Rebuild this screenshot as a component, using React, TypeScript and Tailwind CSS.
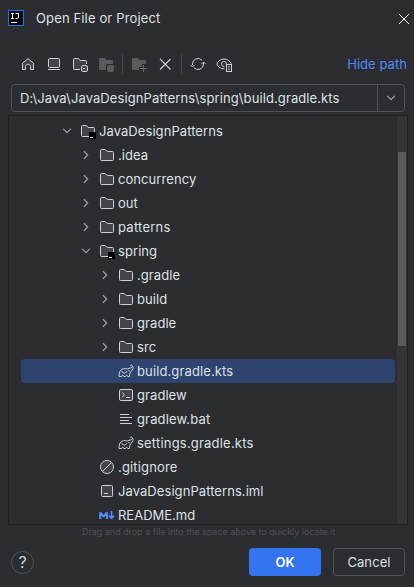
import React from "react";

type IconName = "folder" | "module" | "gradle" | "shell" | "text" | "ignored" | "iml" | "md";

interface Node {
  name: string;
  icon: IconName;
  arrow?: "open" | "closed";
  pad: string;
  tracking?: string;
  selected?: boolean;
}

const nodes: Node[] = [
  { name: "JavaDesignPatterns", icon: "module", arrow: "open", pad: "pl-[50px]" },
  { name: ".idea", icon: "folder", arrow: "closed", pad: "pl-[69px]" },
  { name: "concurrency", icon: "folder", arrow: "closed", pad: "pl-[69px]" },
  { name: "out", icon: "folder", arrow: "closed", pad: "pl-[69px]" },
  { name: "patterns", icon: "folder", arrow: "closed", pad: "pl-[69px]", tracking: "tracking-[0.25px]" },
  { name: "spring", icon: "module", arrow: "open", pad: "pl-[69px]" },
  { name: ".gradle", icon: "folder", arrow: "closed", pad: "pl-[88px]" },
  { name: "build", icon: "folder", arrow: "closed", pad: "pl-[88px]" },
  { name: "gradle", icon: "folder", arrow: "closed", pad: "pl-[88px]" },
  { name: "src", icon: "folder", arrow: "closed", pad: "pl-[88px]" },
  { name: "build.gradle.kts", icon: "gradle", pad: "pl-[88px]", tracking: "tracking-[0.12px]", selected: true },
  { name: "gradlew", icon: "shell", pad: "pl-[88px]" },
  { name: "gradlew.bat", icon: "text", pad: "pl-[88px]", tracking: "tracking-[0.15px]" },
  { name: "settings.gradle.kts", icon: "gradle", pad: "pl-[88px]", tracking: "tracking-[0.2px]" },
  { name: ".gitignore", icon: "ignored", pad: "pl-[69px]", tracking: "tracking-[0.15px]" },
  { name: "JavaDesignPatterns.iml", icon: "iml", pad: "pl-[69px]" },
  { name: "README.md", icon: "md", pad: "pl-[69px]", tracking: "tracking-normal" },
];

function Svg({ children }: { children: React.ReactNode }) {
  return (
    <svg width="16" height="16" viewBox="0 0 16 16" fill="none" stroke="#ced0d6" className="shrink-0">
      {children}
    </svg>
  );
}

const folderPath =
  "M1.5 3.5a1 1 0 0 1 1-1h3.7l2.1 2h5.2a1 1 0 0 1 1 1v7a1 1 0 0 1-1 1h-11a1 1 0 0 1-1-1z";

function FileIcon({ name }: { name: IconName }) {
  switch (name) {
    case "folder":
      return <Svg><path d={folderPath} fill="#43454a" /></Svg>;
    case "module":
      return (
        <Svg>
          <path d={folderPath} fill="#43454a" />
          <rect x="9" y="9" width="7" height="7" fill="#000" stroke="none" />
          <path d="M10 14.5h3" stroke="#fff" />
        </Svg>
      );
    case "gradle":
      return (
        <Svg>
          <path d="M1 13.5C.9 10 1.8 7.2 4.2 6.1c2-.9 3.7-.1 5.3-.2 1.2-.1 1.6-.9 2.6-.9 1.6 0 2.3-1 2.3-1.9 0-1.3-1.9-1.4-2.2-.4M14.4 3.1c1.3 1.4.5 3.5-1 4.9-.8.8-1.4 1.4-1.5 2.6-.1 1.3-.3 2-.6 2.9H9.7c-.1-1.6-2-1.6-2.2 0H5.8c-.1-1.6-2-1.6-2.2 0H1" strokeLinejoin="round" />
          <path d="M3.8 8.3c.5 1.7 2.1 2.2 3.5 1.4l1.6-1.1M10.6 7.5l.8.5" strokeLinecap="round" />
        </Svg>
      );
    case "shell":
      return (
        <Svg>
          <rect x="1.5" y="2.5" width="13" height="11" rx="1.5" fill="#43454a" />
          <path d="m4.2 5.7 2.3 2.1-2.3 2.1M8 10.5h4" />
        </Svg>
      );
    case "text":
      return <Svg><path d="M2 3.5h9M2 6.5h12M2 9.5h9M2 12.5h12" /></Svg>;
    case "ignored":
      return (
        <Svg>
          <circle cx="8" cy="8" r="6.5" fill="#43454a" />
          <path d="m3.5 12.5 9-9" />
        </Svg>
      );
    case "iml":
      return (
        <Svg>
          <rect x="2.5" y="2.5" width="11" height="11" rx="1" fill="#43454a" />
          <path d="M5 10.5h4" />
        </Svg>
      );
    case "md":
      return (
        <Svg>
          <path d="M1.2 12V5.4L4.6 9.6 8 5.4V12" stroke="#548af7" strokeWidth="2.2" strokeLinejoin="bevel" />
          <path d="M12.500 4v7.500M10 8.700l2.500 2.600L15 8.700" stroke="#548af7" strokeWidth="1.700" />
        </Svg>
      );
  }
}

function Chevron({ open }: { open: boolean }) {
  return (
    <Svg>
      <path d={open ? "M4.5 6.2 8 9.7l3.5-3.5" : "m6.2 4.5 3.5 3.5-3.5 3.5"} stroke="#9da0a8" strokeWidth="1.2" strokeLinecap="round" />
    </Svg>
  );
}

function Row({ node }: { node: Node }) {
  return (
    <div className={`ml-3 mr-[13px] flex h-6 shrink-0 items-center rounded ${node.selected ? "bg-[#2e436e]" : ""}`}>
      <div className={`-ml-3 flex items-center ${node.pad}`}>
        {node.arrow ? <Chevron open={node.arrow === "open"} /> : <span className="w-4" />}
        <span className="ml-[5px] flex"><FileIcon name={node.icon} /></span>
        <span className={`ml-[3px] ${node.tracking ?? "tracking-[0.07px]"}`}>{node.name}</span>
      </div>
    </div>
  );
}

function Separator() {
  return <div className="h-5 w-px bg-[#43454a]" />;
}

function Toolbar() {
  return (
    <div className="mt-[18px] flex h-5 items-center pl-5 pr-[7px]">
      <div className="flex items-center gap-[10px]">
        <Svg><path d="M2.5 7.2 8 2.5l5.5 4.7v6.3h-3v-3.2c0-2.7-5-2.7-5 0v3.2h-3z" fill="#43454a" strokeLinejoin="round" /></Svg>
        <Svg>
          <rect x="2.5" y="2.5" width="11" height="9" rx="1" fill="#43454a" />
          <path d="M2 13.5h12" />
        </Svg>
        <Svg>
          <path d="M8 13.5H2.5a1 1 0 0 1-1-1v-9a1 1 0 0 1 1-1h3.7l2.1 2h5.2a1 1 0 0 1 1 1V8" fill="#43454a" />
          <rect x="8.5" y="8.5" width="7" height="7" rx="1.8" fill="#2b2d30" stroke="none" />
          <rect x="9.5" y="9.5" width="6" height="6" rx="1.5" fill="#43454a" />
          <path d="M11 12.5h2" />
        </Svg>
        <Svg>
          <path d="M1 3.5C1 2.5 1.5 2 2.5 2h4l2 2h5C14.5 4 15 4.5 15 5.5V8H9.5C8.5 8 8 8.5 8 9.5V14H2.5C1.5 14 1 13.5 1 12.5z" fill="#5a5b5c" stroke="none" />
          <rect x="9" y="9" width="7" height="7" rx="2" fill="#5a5b5c" stroke="none" />
        </Svg>
      </div>
      <span className="ml-2"><Separator /></span>
      <div className="ml-2 flex items-center gap-[10px]">
        <Svg>
          <path d="M1 3.5C1 2.5 1.5 2 2.5 2h4l2 2h5C14.5 4 15 4.5 15 5.5V8h-4v3H8v3H2.5C1.5 14 1 13.5 1 12.5z" fill="#5a5b5c" stroke="none" />
          <path d="M12.5 9v7M9 12.5h7" stroke="#6b6c6e" />
        </Svg>
        <Svg><path d="m3 3 10.5 10.5M13.5 3 3 13.5" strokeWidth="1.1" /></Svg>
      </div>
      <span className="ml-2"><Separator /></span>
      <div className="ml-2 flex items-center gap-[10px]">
        <Svg>
          <path d="M2.5 9V8a5.5 5.5 0 0 1 9.5-3.8M13.5 7v1A5.5 5.5 0 0 1 4 11.8M.5 9l2 2 2-2M11.5 8l2-2 2 2" />
        </Svg>
        <Svg>
          <path d="M8.5 12.9C4.5 13 1.8 10.7.8 8c2.8-6.6 11.6-6.6 14.4-.3" />
          <path d="M8.5 10.4a2.500 2.500 0 1 1 2-2.400" />
          <rect x="10.5" y="8.5" width="5" height="7" fill="#2b2d30" />
          <path d="M12 10.8h2M12 13.2h2" />
        </Svg>
      </div>
      <span className="ml-auto tracking-[0.05px] text-[#548af7]">Hide path</span>
    </div>
  );
}

export default function App() {
  return (
    <div className="flex h-[587px] w-[414px] flex-col overflow-hidden bg-[#2b2d30] font-['Inter',sans-serif] text-[13px] leading-5 text-[#dfe1e5]">
      <header className="flex h-9 shrink-0 items-center pl-2 pr-[4px]">
        <svg width="16" height="16" viewBox="0 0 16 16" className="shrink-0">
          <rect x=".5" y=".5" width="15" height="15" fill="#000" stroke="#087cfa" />
          <path d="M3 3.5h3M4.5 3.5v5M3 8.5h3M7.500 3.500h3v3.600q0 1.400-1.400 1.400H7.500M3 12.500h6" fill="none" stroke="#fff" />
        </svg>
        <h1 className="ml-3 font-normal tracking-[0.14px]">Open File or Project</h1>
        <svg width="12" height="12" viewBox="0 0 12 12" className="ml-auto mt-[2px]">
          <path d="m1 1 10 10M11 1 1 11" stroke="#fff" />
        </svg>
      </header>
      <Toolbar />
      <div className="ml-[11px] mr-[9px] mt-[10px] flex h-7 shrink-0 rounded-[4px] border border-[#4e5157]">
        <div className="flex flex-1 items-center pl-2 tracking-[0.1px]">D:\Java\JavaDesignPatterns\spring\build.gradle.kts</div>
        <div className="flex w-[27px] items-center justify-center border-l border-[#4e5157]"><Chevron open /></div>
      </div>
      <div className="ml-2 mr-[6px] mt-[3px] flex h-[410px] shrink-0 border border-[#1e1f22]">
        <div className="flex flex-1 flex-col overflow-hidden pt-[3px]">
          {nodes.map((n) => <Row key={n.name} node={n} />)}
        </div>
        <div className="-ml-[11px] w-[10px] bg-[#343538] px-px pt-[36px]">
          <div className="h-[194px] bg-[#5a5b5d]" />
        </div>
      </div>
      <p className="ml-[82px] text-[9px] leading-[13px] tracking-[-0.03px] text-[#4e5055]">Drag and drop a file into the space above to quickly locate it</p>
      <footer className="mt-[10px] flex items-center pl-[11px] pr-[9px]">
        <button className="flex h-[23px] w-[23px] items-center justify-center rounded-full border border-[#4e5157] text-base text-[#ced0d6]">?</button>
        <button className="ml-auto h-7 w-[72px] rounded-[4px] bg-[#3574f0] font-semibold text-white">OK</button>
        <button className="ml-3 h-7 w-[72px] rounded-[4px] border border-[#4e5157] tracking-[0.1px]">Cancel</button>
      </footer>
    </div>
  );
}
